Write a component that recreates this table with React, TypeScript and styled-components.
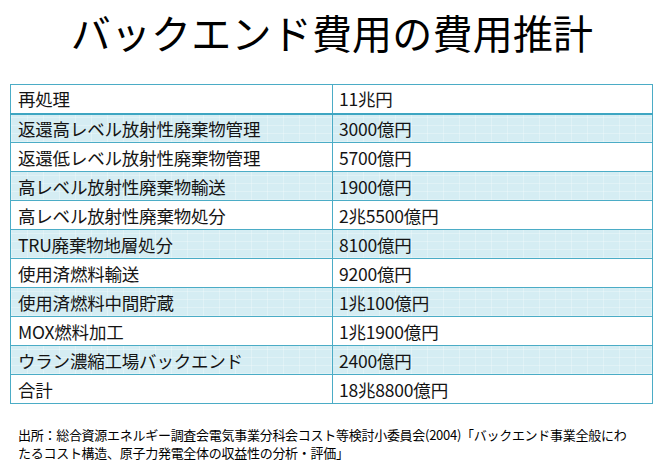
import React from "react";
import styled, { createGlobalStyle } from "styled-components";

const GlobalStyle = createGlobalStyle`
  html, body {
    margin: 0;
    padding: 0;
    background: #ffffff;
  }
  body {
    font-family: "Noto Sans CJK JP", "Noto Sans", sans-serif;
    color: #000;
  }
`;

const Page = styled.div`
  width: 664px;
  height: 462px;
  overflow: hidden;
  display: flex;
  flex-direction: column;
`;

const Title = styled.h1`
  margin: 0 0 20px 0;
  height: 64px;
  line-height: 64px;
  font-size: 40px;
  font-weight: 400;
  text-align: center;
  letter-spacing: 0.2px;
`;

const Table = styled.table`
  margin-left: 10px;
  width: 643px;
  border-collapse: collapse;
  table-layout: fixed;
`;

const Row = styled.tr<{ $shaded: boolean; $header?: boolean }>`
  height: 29px;
  background-color: ${(p) => (p.$shaded ? "#d5edf3" : "#ffffff")};
  background-image: ${(p) =>
    p.$shaded
      ? "repeating-linear-gradient(90deg, rgba(255,255,255,0.25) 0 1px, transparent 1px 16px), repeating-linear-gradient(0deg, rgba(255,255,255,0.25) 0 1px, transparent 1px 8px)"
      : "none"};
  border-bottom: ${(p) => (p.$header ? "2.5px solid #3ea6c2" : "1px solid #4bacc6")};
`;

const Cell = styled.td<{ $left?: boolean }>`
  box-sizing: border-box;
  border-left: 1px solid #4bacc6;
  border-right: 1px solid #4bacc6;
  border-top: 1px solid #4bacc6;
  padding: 0 0 0 ${(p) => (p.$left ? "7px" : "6px")};
  width: ${(p) => (p.$left ? "322px" : "auto")};
  font-size: 17.5px;
  line-height: 27px;
  color: #141414;
  white-space: nowrap;
  letter-spacing: -0.2px;
`;

const Note = styled.p`
  margin: 22px 0 0 18px;
  font-size: 13px;
  line-height: 18px;
  color: #000;
  letter-spacing: -0.28px;
  white-space: nowrap;
`;

const rows: [string, string][] = [
  ["再処理", "11兆円"],
  ["返還高レベル放射性廃棄物管理", "3000億円"],
  ["返還低レベル放射性廃棄物管理", "5700億円"],
  ["高レベル放射性廃棄物輸送", "1900億円"],
  ["高レベル放射性廃棄物処分", "2兆5500億円"],
  ["TRU廃棄物地層処分", "8100億円"],
  ["使用済燃料輸送", "9200億円"],
  ["使用済燃料中間貯蔵", "1兆100億円"],
  ["MOX燃料加工", "1兆1900億円"],
  ["ウラン濃縮工場バックエンド", "2400億円"],
  ["合計", "18兆8800億円"],
];

export default function App() {
  return (
    <>
      <GlobalStyle />
      <Page>
        <Title>バックエンド費用の費用推計</Title>
        <Table>
          <tbody>
            {rows.map(([name, cost], i) => (
              <Row key={name} $shaded={i % 2 === 1} $header={i === 0}>
                <Cell $left>{name}</Cell>
                <Cell>{cost}</Cell>
              </Row>
            ))}
          </tbody>
        </Table>
        <Note>
          出所：総合資源エネルギー調査会電気事業分科会コスト等検討小委員会(2004)「バックエンド事業全般にわ
          <br />
          たるコスト構造、原子力発電全体の収益性の分析・評価」
        </Note>
      </Page>
    </>
  );
}
